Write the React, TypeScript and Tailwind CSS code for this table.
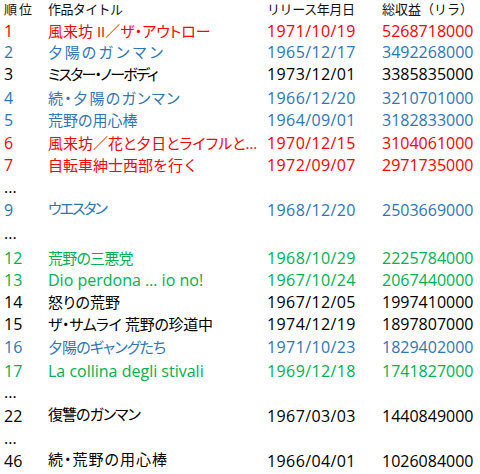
const RED = "text-[#ff0000]";
const BLUE = "text-[#2e75b6]";
const GREEN = "text-[#00b050]";
const BLACK = "text-black";

// title cell styles: CJK titles in a proportional cut, Latin ones a bit larger
const PALT = "text-[15px] [font-feature-settings:'palt']";
const FULL = "text-[15px]";
const LATIN = "text-[16px]";

type Row = {
  rank: string;
  title?: string;
  date?: string;
  gross?: string;
  color: string;
  h: string;
  t?: string;
  lift?: boolean;
};

const rows: Row[] = [
  { rank: "1", title: "風来坊 II／ザ・アウトロー", date: "1971/10/19", gross: "5268718000", color: RED, h: "h-[22px]", t: PALT },
  { rank: "2", title: "夕陽のガンマン", date: "1965/12/17", gross: "3492268000", color: BLUE, h: "h-[21px]", t: `${FULL} tracking-[1.8px]` },
  { rank: "3", title: "ミスター・ノーボディ", date: "1973/12/01", gross: "3385835000", color: BLACK, h: "h-[22px]", t: `${PALT} tracking-[-1.8px]` },
  { rank: "4", title: "続・夕陽のガンマン", date: "1966/12/20", gross: "3210701000", color: BLUE, h: "h-[24px]", t: `${PALT} tracking-[1.3px]` },
  { rank: "5", title: "荒野の用心棒", date: "1964/09/01", gross: "3182833000", color: BLUE, h: "h-[22px]", t: PALT },
  { rank: "6", title: "風来坊／花と夕日とライフルと…", date: "1970/12/15", gross: "3104061000", color: RED, h: "h-[23px]", t: PALT },
  { rank: "7", title: "自転車紳士西部を行く", date: "1972/09/07", gross: "2971735000", color: RED, h: "h-[22px]", t: FULL },
  { rank: "...", color: BLACK, h: "h-[22px]" },
  { rank: "9", title: "ウエスタン", date: "1968/12/20", gross: "2503669000", color: BLUE, h: "h-[23px]", t: `${PALT} tracking-[-2px]`, lift: true },
  { rank: "...", color: BLACK, h: "h-[23px]" },
  { rank: "12", title: "荒野の三悪党", date: "1968/10/29", gross: "2225784000", color: GREEN, h: "h-[25px]", t: `${PALT} tracking-[-0.8px]` },
  { rank: "13", title: "Dio perdona … io no!", date: "1967/10/24", gross: "2067440000", color: GREEN, h: "h-[22px]", t: LATIN },
  { rank: "14", title: "怒りの荒野", date: "1967/12/05", gross: "1997410000", color: BLACK, h: "h-[22px]", t: PALT },
  { rank: "15", title: "ザ・サムライ 荒野の珍道中", date: "1974/12/19", gross: "1897807000", color: BLACK, h: "h-[22px]", t: `${PALT} tracking-[-0.3px]` },
  { rank: "16", title: "夕陽のギャングたち", date: "1971/10/23", gross: "1829402000", color: BLUE, h: "h-[23px]", t: `${PALT} tracking-[-0.9px]` },
  { rank: "17", title: "La collina degli stivali", date: "1969/12/18", gross: "1741827000", color: GREEN, h: "h-[24px]", t: LATIN },
  { rank: "...", color: BLACK, h: "h-[21px]" },
  { rank: "22", title: "復讐のガンマン", date: "1967/03/03", gross: "1440849000", color: BLACK, h: "h-[24px]", t: `${PALT} tracking-[-1px]`, lift: true },
  { rank: "...", color: BLACK, h: "h-[22px]" },
  { rank: "46", title: "続・荒野の用心棒", date: "1966/04/01", gross: "1026084000", color: BLACK, h: "h-[23px]", t: `${PALT} tracking-[1px]`, lift: true },
];

const cols = "grid grid-cols-[44px_219px_115px_1fr] items-end";

export default function App() {
  return (
    <div className="w-[480px] h-[474px] bg-white pl-[4px] font-['Open_Sans','Noto_Sans_CJK_JP',sans-serif] overflow-hidden">
      <div className={`${cols} h-[19px] text-[13px] leading-[13px] text-[#111]`}>
        <div className="pb-[3px] tracking-[2px]">順位</div>
        <div className="pb-[3px] tracking-[-0.6px]">作品タイトル</div>
        <div className="pb-[3px] tracking-[-0.4px]">リリース年月日</div>
        <div className="pb-[3px]">総収益（リラ）</div>
      </div>
      {rows.map((r, i) => (
        <div key={i} className={`${cols} ${r.h} ${r.color} text-[16px] leading-[16px]`}>
          <div className="pb-[2px]">{r.rank}</div>
          <div className={`whitespace-nowrap ${r.t ?? ""} ${r.lift ? "pb-[4px]" : "pb-[2px]"}`}>{r.title}</div>
          <div className="pb-[2px] tracking-[0.4px]">{r.date}</div>
          <div className="pb-[2px]">{r.gross}</div>
        </div>
      ))}
    </div>
  );
}
